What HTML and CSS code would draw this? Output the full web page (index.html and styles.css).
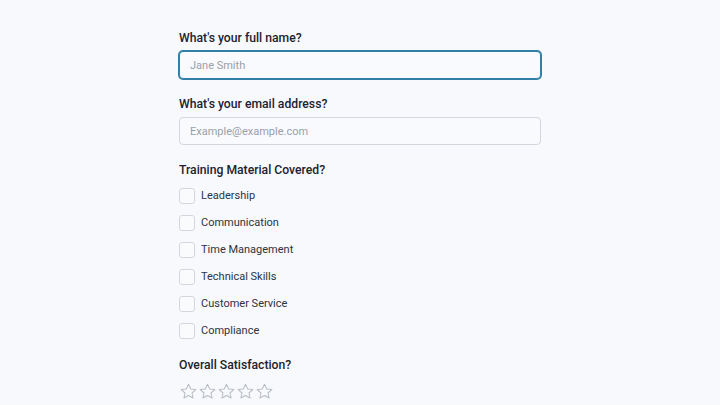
FILE: index.html
```html
<!DOCTYPE html>
<html lang="en">
<head>
<meta charset="UTF-8">
<title>Training Feedback</title>
<link rel="stylesheet" href="styles.css">
</head>
<body>

<form class="survey">

    <div class="field">
        <label class="question" for="fullname">What's your full name?</label>
        <input id="fullname" class="text focused" placeholder="Jane Smith">
    </div>

    <div class="field">
        <label class="question" for="email">What's your email address?</label>
        <input id="email" class="text" placeholder="Example@example.com">
    </div>

    <div class="field checks">
        <div class="question">Training Material Covered?</div>
        <label class="option"><span class="box"></span>Leadership</label>
        <label class="option"><span class="box"></span>Communication</label>
        <label class="option"><span class="box"></span>Time Management</label>
        <label class="option"><span class="box"></span>Technical Skills</label>
        <label class="option"><span class="box"></span>Customer Service</label>
        <label class="option"><span class="box"></span>Compliance</label>
    </div>

    <div class="field last">
        <div class="question">Overall Satisfaction?</div>
        <div class="stars">
            <svg viewBox="0 0 24 24"><path d="M12 2.8l2.8 6 6.5.7-4.9 4.4 1.4 6.4L12 17l-5.8 3.3 1.4-6.4-4.9-4.4 6.5-.7z"/></svg>
            <svg viewBox="0 0 24 24"><path d="M12 2.8l2.8 6 6.5.7-4.9 4.4 1.4 6.4L12 17l-5.8 3.3 1.4-6.4-4.9-4.4 6.5-.7z"/></svg>
            <svg viewBox="0 0 24 24"><path d="M12 2.8l2.8 6 6.5.7-4.9 4.4 1.4 6.4L12 17l-5.8 3.3 1.4-6.4-4.9-4.4 6.5-.7z"/></svg>
            <svg viewBox="0 0 24 24"><path d="M12 2.8l2.8 6 6.5.7-4.9 4.4 1.4 6.4L12 17l-5.8 3.3 1.4-6.4-4.9-4.4 6.5-.7z"/></svg>
            <svg viewBox="0 0 24 24"><path d="M12 2.8l2.8 6 6.5.7-4.9 4.4 1.4 6.4L12 17l-5.8 3.3 1.4-6.4-4.9-4.4 6.5-.7z"/></svg>
        </div>
    </div>

</form>

</body>
</html>
```

FILE: styles.css
```css
body{
    margin:0;
    background:#f7f9fc;
    font-family: Roboto, "Noto Sans", sans-serif;
    color:#1c2230;
}

.survey{
    width:362px;
    margin:0 auto;
    padding-top:29px;
}

.field{
    margin-bottom:16px;
}

.question{
    display:block;
    font-size:12.2px;
    font-weight:500;
    line-height:18px;
    margin-bottom:4px;
}

.text{
    display:block;
    box-sizing:border-box;
    width:100%;
    height:28px;
    padding:0 10px;
    border:1.5px solid #d3d7dd;
    border-radius:4px;
    background:#f8fafd;
    font-family: Roboto, sans-serif;
    font-size:11px;
    color:#1c2230;
    outline:none;
}

.text::placeholder{
    color:#9aa0a9;
}

.focused{
    border-color:#2f7fa9;
    box-shadow:0 0 0 1px #2f7fa9;
}

.checks .question{
    margin-bottom:3px;
}

.option{
    display:flex;
    align-items:center;
    height:27px;
    font-size:11px;
    color:#2d3340;
}

.box{
    width:14px;
    height:14px;
    border:1.5px solid #d3d7dd;
    border-radius:3px;
    background:#fafbfd;
    margin-right:6px;
}

.field.last .question{
    margin-top:-4px;
    margin-bottom:8px;
}

.stars{
    display:flex;
}

.stars svg{
    width:19px;
    height:19px;
    fill:none;
    stroke:#b9bdc4;
    stroke-width:1.3;
    stroke-linejoin:round;
}
```
